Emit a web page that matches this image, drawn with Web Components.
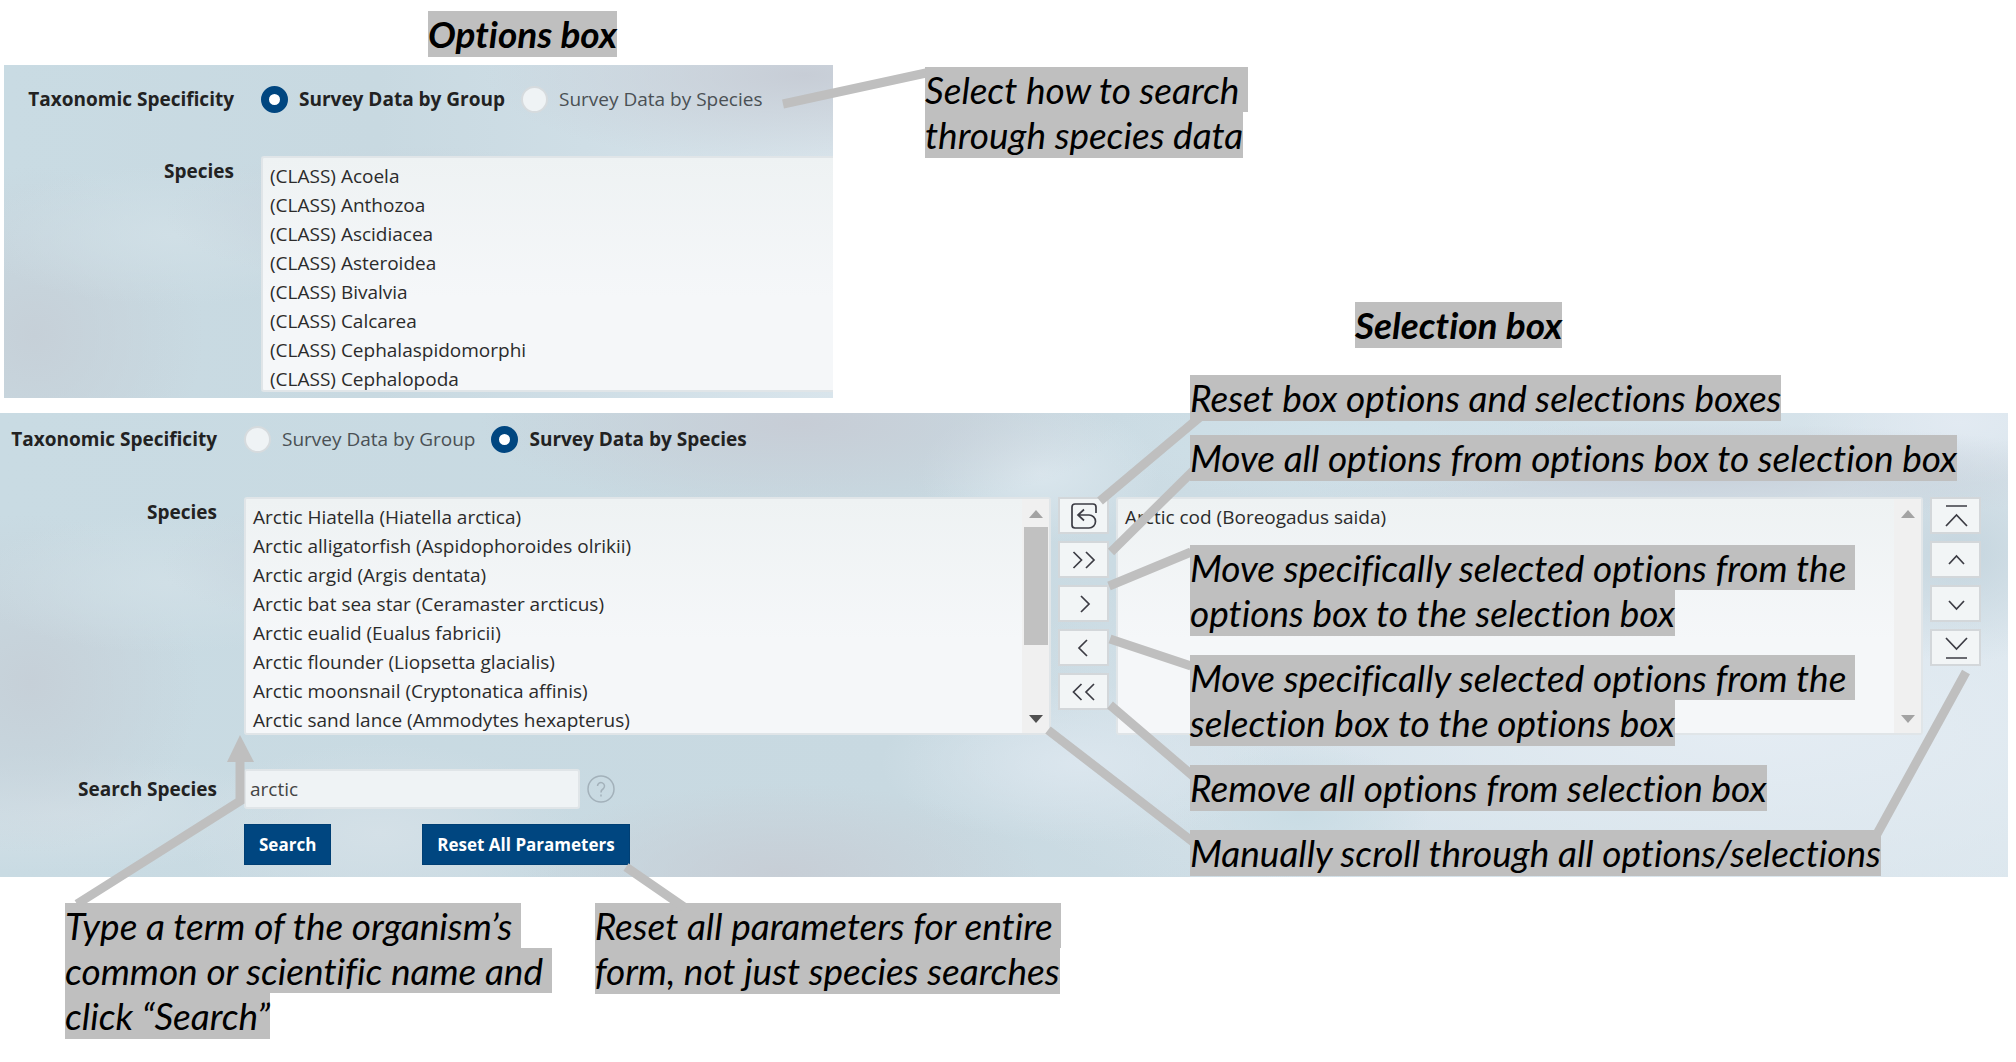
<!DOCTYPE html>
<html lang="en">
<head>
<meta charset="utf-8">
<title>Species search guide</title>
<style>
  body { margin: 0; background: #fff; color: #222; font-family: "Open Sans", "Noto Sans", sans-serif; font-size: 19px; }
</style>
</head>
<body>
<guide-page></guide-page>

<script>
const define = (name, markup, setup) => {
  const tpl = document.createElement('template');
  tpl.innerHTML = markup;
  customElements.define(name, class extends HTMLElement {
    constructor() {
      super();
      this.attachShadow({ mode: 'open' }).append(tpl.content.cloneNode(true));
    }
    connectedCallback() { if (setup) setup(this, this.shadowRoot); }
  });
};

/* Highlighted remark; each line of the "lines" attribute is split by "|" */
define('call-out', `
  <style>
    :host { display: block; color: #000; font: italic 37px/45px Lato, sans-serif; font-variant-ligatures: no-common-ligatures; }
    :host([heading]) { font-weight: 700; }
    span { display: block; width: fit-content; background: #bfbfbf; white-space: pre; }
    span:last-child { padding-bottom: 1px; }
  </style>
  <div id="box"></div>`,
  (el, root) => {
    const box = root.getElementById('box');
    box.replaceChildren(...el.getAttribute('lines').split('|').map(t => {
      const s = document.createElement('span');
      s.textContent = t;
      return s;
    }));
  });

/* Blurred water backdrop shared by both form captures */
define('water-panel', `
  <style>
    :host {
      display: block; overflow: hidden;
      background:
        radial-gradient(ellipse 320px 90px at 800px 10px, #c7cdd6 0, #c7cdd600 100%),
        radial-gradient(ellipse 240px 70px at 400px 150px, #c8d4dd 0, #c8d4dd00 100%),
        radial-gradient(ellipse 200px 70px at 170px 170px, #d0dfe6 0, #d0dfe600 100%),
        radial-gradient(ellipse 170px 170px at 30px 270px, #c6d0d8 0, #c6d0d800 100%),
        radial-gradient(ellipse 240px 60px at 60px 400px, #d3e0e7 0, #d3e0e700 100%),
        radial-gradient(ellipse 200px 90px at 380px 420px, #d4e0e7 0, #d4e0e700 100%),
        radial-gradient(ellipse 260px 90px at 780px 460px, #c7ced6 0, #c7ced600 100%),
        radial-gradient(ellipse 120px 70px at 1040px 60px, #dae6ed 0, #dae6ed00 100%),
        radial-gradient(ellipse 200px 80px at 1080px 350px, #dbe6ee 0, #dbe6ee00 100%),
        radial-gradient(ellipse 130px 70px at 1300px 400px, #c9dce4 0, #c9dce400 100%),
        radial-gradient(ellipse 260px 60px at 1350px 30px, #cfe1e9 0, #cfe1e900 100%),
        radial-gradient(ellipse 420px 50px at 1700px 60px, #c8d0da 0, #c8d0da00 100%),
        radial-gradient(ellipse 160px 60px at 1960px 10px, #e2eaf2 0, #e2eaf200 100%),
        radial-gradient(ellipse 140px 110px at 1960px 140px, #c5d5de 0, #c5d5de00 100%),
        radial-gradient(ellipse 800px 240px at 1750px 320px, #e4ecf3 0, #e4ecf300 100%),
        linear-gradient(90deg, #c9dbe3 0, #c8d9e1 45%, #cfdee6 70%, #d9e5ec 100%);
    }
  </style>
  <slot></slot>`);

/* Label column on the left, control on the right */
define('form-row', `
  <style>
    :host { display: flex; }
    ::slotted([slot=label]) { flex: none; box-sizing: border-box; width: var(--label, 217px); text-align: right; font-weight: 700; line-height: 30px; }
    .field { flex: 1; min-width: 0; padding-left: 27px; display: flex; }
  </style>
  <slot name="label"></slot><div class="field"><slot></slot></div>`);

define('radio-pair', `
  <style>
    :host { display: flex; align-items: center; gap: 16px; height: 30px; }
    label { display: flex; align-items: center; gap: 11px; color: #4a5054; white-space: nowrap; }
    input { appearance: none; flex: none; width: 27px; height: 27px; margin: 0; box-sizing: border-box; border: 2px solid #d6dbde; border-radius: 50%; background: #eff3f5; }
    input:checked { border: 8px solid #004680; background: #fff; }
    label:has(:checked) { font-weight: 700; color: #222; }
  </style>
  <label><input type="radio" name="by" value="group"><span>Survey Data by Group</span></label>
  <label><input type="radio" name="by" value="species"><span>Survey Data by Species</span></label>`,
  (el, root) => { root.querySelector(`[value=${el.getAttribute('value')}]`).checked = true; });

/* List box with its own scroll track */
define('list-box', `
  <style>
    :host { display: flex; flex: 1; min-width: 0; height: 238px; box-sizing: border-box; border: 2px solid #e0e5e8; border-radius: 3px; background: linear-gradient(180deg, #eef2f3, #f5f7f9 60%); }
    select { flex: 1; min-width: 0; appearance: none; border: 0; margin: 0; padding: 5px 0 0; background: none; font: inherit; color: #2b2b2b; overflow: hidden; outline: none; }
    option { min-height: 29px; line-height: 29px; padding: 0 7px; color: #2b2b2b; }
    .track { display: none; flex: none; width: 27px; background: #f0f0f0; flex-direction: column; align-items: center; box-sizing: border-box; padding: 11px 0 10px; }
    :host([track]) .track { display: flex; }
    .thumb { width: 24px; height: 118px; margin-top: 9px; background: #c1c1c1; }
    :host([track=idle]) .thumb { visibility: hidden; }
    .down { margin-top: auto; fill: #505050; }
    :host([track=idle]) .down { fill: #a3a3a3; }
    .up { fill: #a3a3a3; }
    svg { display: block; width: 14px; height: 8px; }
  </style>
  <select multiple size="8"></select>
  <div class="track">
    <svg class="up" viewBox="0 0 14 8"><path d="M7 0 14 8H0z"/></svg>
    <div class="thumb"></div>
    <svg class="down" viewBox="0 0 14 8"><path d="M0 0h14L7 8z"/></svg>
  </div>`,
  (el, root) => {
    const sel = root.querySelector('select');
    sel.setAttribute('aria-label', el.getAttribute('name'));
    sel.replaceChildren(...el.getAttribute('items').split('|').map(t => new Option(t)));
  });

const glyphs = {
  reset: ['Reset', 'M26 11V5q0-3-3-3H5Q2 2 2 5v18q0 3 3 3h14a6.500 6.500 0 0 0 0-13H8M14 7.500 8 13l6 5.500'],
  allRight: ['Move all', 'M3.500 6l8 8-8 8M16 6l8 8-8 8'],
  right: ['Move', 'M11 6l8 8-8 8'],
  left: ['Remove', 'M17 6l-8 8 8 8'],
  allLeft: ['Remove all', 'M11.500 6l-8 8 8 8M24 6l-8 8 8 8'],
  top: ['Top', 'M4 4h21M4 24 14.500 13 25 24'],
  up: ['Up', 'M7 18l7.500-8 7.500 8'],
  down: ['Down', 'M7 11l7.500 8 7.500-8'],
  bottom: ['Bottom', 'M4 24h21M4 4l10.500 11L25 4']
};
define('button-stack', `
  <style>
    :host { display: flex; flex: none; flex-direction: column; gap: 7px; margin-left: 7px; }
    button { display: flex; align-items: center; justify-content: center; width: 51px; height: 37px; padding: 0; box-sizing: border-box; border: 2px solid #d3d7da; background: #f2f5f6; }
    svg { width: 28px; height: 28px; fill: none; stroke: #3c3c44; stroke-width: 1.700; }
  </style>
  <slot></slot>`,
  (el, root) => {
    for (const key of el.getAttribute('icons').split(' ')) {
      const b = document.createElement('button');
      b.type = 'button';
      b.setAttribute('aria-label', glyphs[key][0]);
      b.innerHTML = `<svg viewBox="0 0 28 28"><path d="${glyphs[key][1]}"/></svg>`;
      root.append(b);
    }
  });

define('search-field', `
  <style>
    :host { display: flex; align-items: center; }
    label { width: 217px; text-align: right; font-weight: 700; }
    input { width: 336px; height: 40px; margin: 0 7px 0 27px; box-sizing: border-box; border: 2px solid #e0e5e8; border-radius: 3px; background: #eff3f5; padding: 0 4px; font: inherit; color: #444; outline: none; }
    svg { width: 28px; height: 28px; fill: none; stroke: #a3b1ba; stroke-width: 1.500; }
  </style>
  <label for="term">Search Species</label>
  <input id="term" type="text" value="arctic">
  <svg viewBox="0 0 28 28"><circle cx="14" cy="14" r="13"/><path d="M10.500 11a3.500 3.500 0 1 1 6 2.500q-2.500 1.500-2.500 4M14 19.500v2"/></svg>`);

define('action-bar', `
  <style>
    :host { display: flex; gap: 91px; padding-left: 244px; }
    button { height: 41px; padding: 0 14px; border: 1px solid #003f74; background: #004680; color: #fff; font: 700 17px "Open Sans", "Noto Sans", sans-serif; white-space: nowrap; }
  </style>
  <button type="button">Search</button>
  <button type="button">Reset All Parameters</button>`);

/* Leader lines that tie each remark to its control */
define('leader-lines', `
  <style>
    :host { position: absolute; left: 0; top: 0; pointer-events: none; }
    svg { display: block; fill: none; stroke: #bfbfbf; stroke-width: 9; }
    .head { fill: #bfbfbf; stroke: none; }
  </style>
  <svg width="2008" height="1050" viewBox="0 0 2008 1050">
    <path d="M783 104 926 73M1100 501 1200 417M1111 552 1193 471M1109 586 1191 552M1110 639 1191 666M1110 705 1193 776M1048 730 1193 842M1966 672 1877 834M626 867 684 907M77 904 240 801V760"/>
    <path class="head" d="M240 735 254 762H227z"/>
  </svg>`);

define('guide-page', `
  <style>
    :host { display: block; position: relative; padding: 11px 8px 22px 0; }
    .top { display: flex; align-items: flex-start; }
    .group { flex: 0 0 829px; margin-left: 4px; }
    .group call-out { margin: 0 0 8px 424px; }
    .first { height: 333px; padding-top: 19px; box-sizing: border-box; --label: 230px; }
    .first form-row + form-row { margin-top: 42px; }
    .first list-box { height: 236px; border-right: 0; border-radius: 3px 0 0 3px; }
    .side { margin: 56px 0 0 92px; }
    .second { margin-top: 15px; padding: 11px 27px 12px 0; }
    .second form-row + form-row { margin-top: 43px; }
    search-field { margin-top: 34px; }
    action-bar { margin-top: 15px; }
    .below { display: flex; align-items: flex-start; gap: 43px; padding: 26px 0 0 65px; }
    .over { position: absolute; left: 1190px; }
  </style>
  <div class="top">
    <div class="group">
      <call-out heading lines="Options box"></call-out>
      <water-panel class="first">
        <form-row><span slot="label">Taxonomic Specificity</span><radio-pair value="group"></radio-pair></form-row>
        <form-row><span slot="label">Species</span><list-box name="Species groups" items="(CLASS) Acoela|(CLASS) Anthozoa|(CLASS) Ascidiacea|(CLASS) Asteroidea|(CLASS) Bivalvia|(CLASS) Calcarea|(CLASS) Cephalaspidomorphi|(CLASS) Cephalopoda"></list-box></form-row>
      </water-panel>
    </div>
    <call-out class="side" lines="Select how to search |through species data"></call-out>
  </div>
  <water-panel class="second">
    <form-row><span slot="label">Taxonomic Specificity</span><radio-pair value="species"></radio-pair></form-row>
    <form-row><span slot="label">Species</span>
      <list-box name="Species" track="on" items="Arctic Hiatella (Hiatella arctica)|Arctic alligatorfish (Aspidophoroides olrikii)|Arctic argid (Argis dentata)|Arctic bat sea star (Ceramaster arcticus)|Arctic eualid (Eualus fabricii)|Arctic flounder (Liopsetta glacialis)|Arctic moonsnail (Cryptonatica affinis)|Arctic sand lance (Ammodytes hexapterus)"></list-box>
      <button-stack icons="reset allRight right left allLeft"></button-stack>
      <list-box style="margin-left:7px" name="Selected species" track="idle" items="Arctic cod (Boreogadus saida)"></list-box>
      <button-stack icons="top up down bottom"></button-stack>
    </form-row>
    <search-field></search-field>
    <action-bar></action-bar>
  </water-panel>
  <leader-lines></leader-lines>
  <div class="below">
    <call-out lines="Type a term of the organism’s |common or scientific name and |click “Search”"></call-out>
    <call-out lines="Reset all parameters for entire |form, not just species searches"></call-out>
  </div>
  <call-out heading class="over" style="left:1355px;top:302px" lines="Selection box"></call-out>
  <call-out class="over" style="top:375px" lines="Reset box options and selections boxes"></call-out>
  <call-out class="over" style="top:435px" lines="Move all options from options box to selection box"></call-out>
  <call-out class="over" style="top:545px" lines="Move specifically selected options from the |options box to the selection box"></call-out>
  <call-out class="over" style="top:655px" lines="Move specifically selected options from the |selection box to the options box"></call-out>
  <call-out class="over" style="top:765px" lines="Remove all options from selection box"></call-out>
  <call-out class="over" style="top:830px" lines="Manually scroll through all options/selections"></call-out>`);
</script>
</body>
</html>
